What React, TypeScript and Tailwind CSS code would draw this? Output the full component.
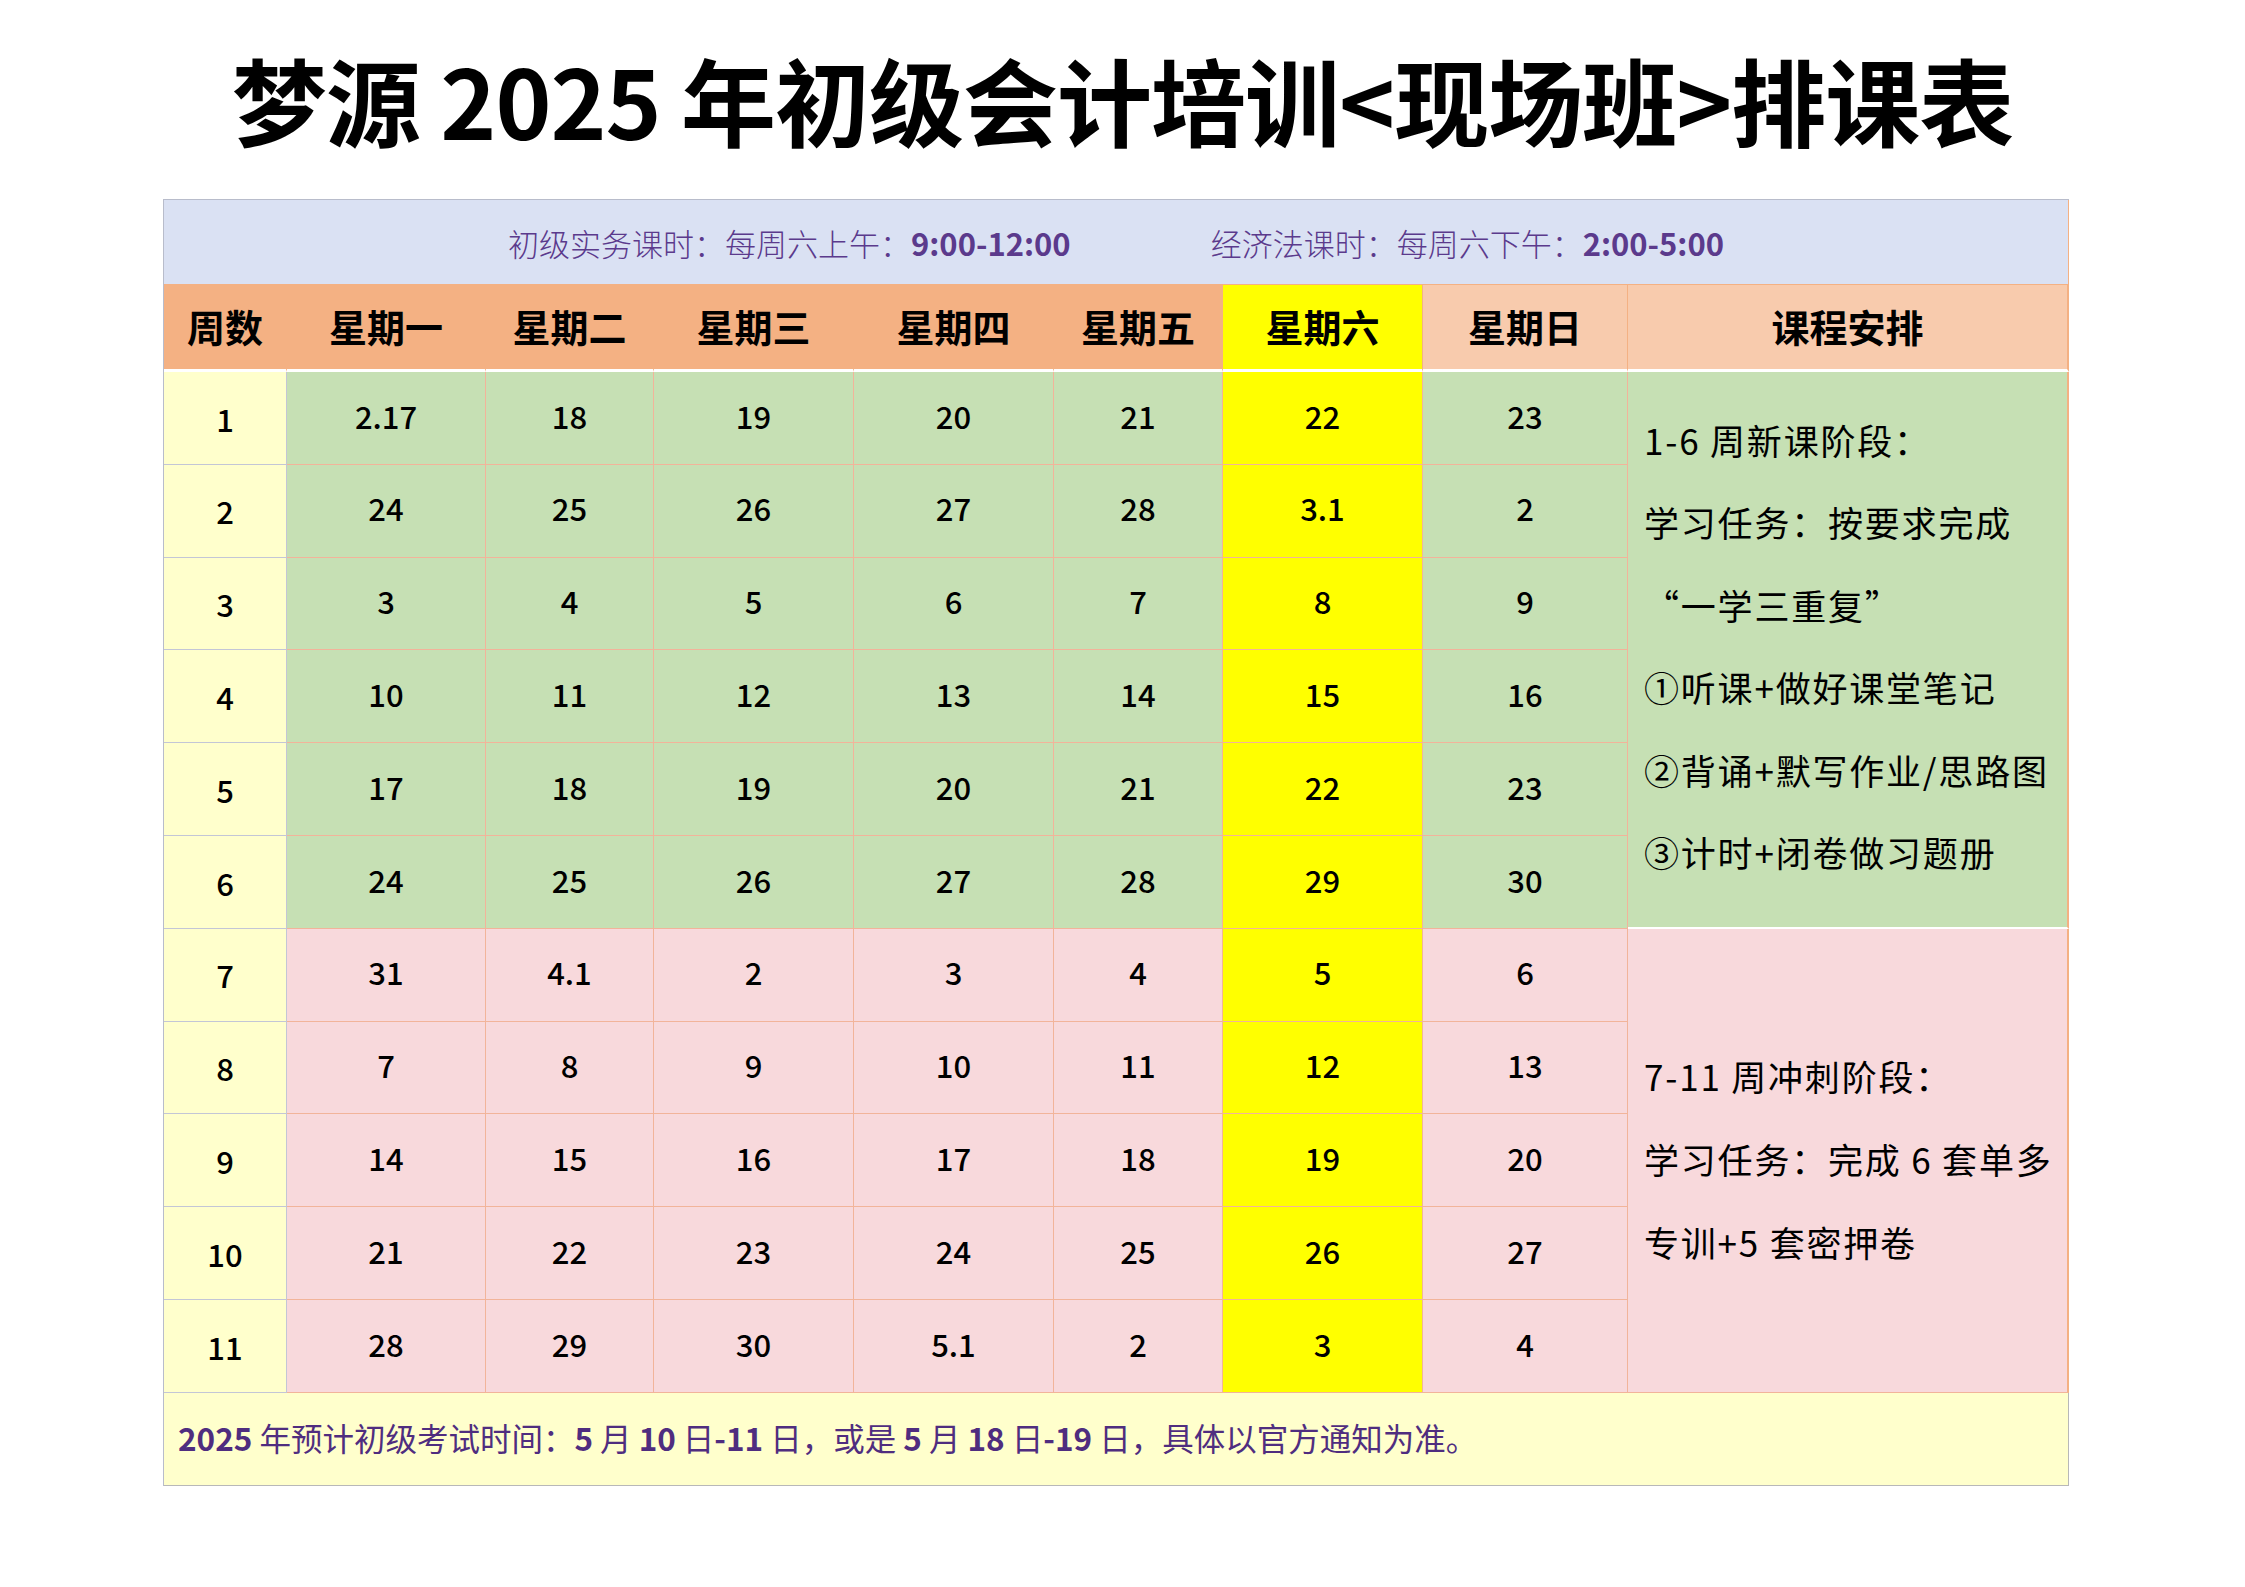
const weeks: { no: number; days: string[] }[] = [
  { no: 1, days: ['2.17', '18', '19', '20', '21', '22', '23'] },
  { no: 2, days: ['24', '25', '26', '27', '28', '3.1', '2'] },
  { no: 3, days: ['3', '4', '5', '6', '7', '8', '9'] },
  { no: 4, days: ['10', '11', '12', '13', '14', '15', '16'] },
  { no: 5, days: ['17', '18', '19', '20', '21', '22', '23'] },
  { no: 6, days: ['24', '25', '26', '27', '28', '29', '30'] },
  { no: 7, days: ['31', '4.1', '2', '3', '4', '5', '6'] },
  { no: 8, days: ['7', '8', '9', '10', '11', '12', '13'] },
  { no: 9, days: ['14', '15', '16', '17', '18', '19', '20'] },
  { no: 10, days: ['21', '22', '23', '24', '25', '26', '27'] },
  { no: 11, days: ['28', '29', '30', '5.1', '2', '3', '4'] },
];

const headers = ['星期一', '星期二', '星期三', '星期四', '星期五'];

const font = "font-['Noto_Sans_CJK_SC',sans-serif]";

export default function App() {
  return (
    <div className={`min-h-[1587px] w-[2245px] bg-white ${font}`}>
      {/* Title */}
      <h1 className="pt-[40px] text-center text-[95px] font-bold leading-[118px] text-black tracking-[-1px]">
        梦源 2025 年初级会计培训&lt;现场班&gt;排课表
      </h1>

      {/* Schedule grid */}
      <div className="ml-[163px] mt-[41px] grid w-[1906px] grid-cols-[123px_199px_168px_200px_200px_169px_200px_205px_1fr] grid-rows-[85px_87px_repeat(11,92.8px)_93px] border-l border-t border-[#b8bccb]">
        {/* info row */}
        <div className="col-span-9 flex items-center justify-center gap-[140px] border-b border-r border-[#f4b183] bg-[#dae1f3] pt-[2px] text-[31px] text-[#5b3a8c]">
          <span className="font-light">
            初级实务课时：每周六上午：<span className="font-semibold">9:00-12:00</span>
          </span>
          <span className="font-light">
            经济法课时：每周六下午：<span className="font-semibold">2:00-5:00</span>
          </span>
        </div>

        {/* header row */}
        <div className="flex items-center justify-center border-b-[3px] border-r border-b-white border-r-[#f4b183] bg-[#f4b183] pb-[4px] text-[38px] font-bold text-black">
          周数
        </div>
        {headers.map((h) => (
          <div
            key={h}
            className="flex items-center justify-center border-b-[3px] border-r border-b-white border-r-[#f4b183] bg-[#f4b183] pb-[4px] text-[38px] font-bold text-black"
          >
            {h}
          </div>
        ))}
        <div className="flex items-center justify-center border-b-[3px] border-r border-b-white border-r-[#f4b183] bg-[#ffff00] pb-[4px] text-[38px] font-bold text-black">
          星期六
        </div>
        <div className="flex items-center justify-center border-b-[3px] border-r border-b-white border-r-[#f4b183] bg-[#f8cbad] pb-[4px] text-[38px] font-bold text-black">
          星期日
        </div>
        <div className="flex items-center justify-center border-b-[3px] border-r-2 border-b-white border-r-[#f4b183] bg-[#f8cbad] pb-[4px] text-[38px] font-bold text-black">
          课程安排
        </div>

        {weeks.map((w, i) => {
          const green = w.no <= 6;
          return (
            <>
              <div
                key={`n${w.no}`}
                className="flex items-center justify-center border-b border-r border-b-[#c3c6d6] border-r-[#c3c6d6] bg-[#ffffcc] pt-[2px] text-[31px] font-medium text-black"
              >
                {w.no}
              </div>
              {w.days.map((d, j) => (
                <div
                  key={`d${w.no}-${j}`}
                  className={`flex items-center justify-center border-b border-r border-[#f2b49a] pb-[4px] text-[31px] font-medium text-black ${
                    j === 5 ? 'bg-[#ffff00]' : green ? 'bg-[#c6e0b4]' : 'bg-[#f8d9dc]'
                  }`}
                >
                  {d}
                </div>
              ))}
              {i === 0 && (
                <div
                  key="plan1"
                  className="row-span-6 flex flex-col justify-center border-b-2 border-r-2 border-b-white border-r-[#f4b183] bg-[#c6e0b4] pb-[6px] pl-[16px] text-[35px] leading-[82.5px] tracking-[1.8px] text-black"
                >
                  <p>1-6 周新课阶段：</p>
                  <p>学习任务：按要求完成</p>
                  <p>“一学三重复”</p>
                  <p>①听课+做好课堂笔记</p>
                  <p>②背诵+默写作业/思路图</p>
                  <p>③计时+闭卷做习题册</p>
                </div>
              )}
              {i === 6 && (
                <div
                  key="plan2"
                  className="row-span-5 flex flex-col justify-center border-b border-r-2 border-b-[#f2b49a] border-r-[#f4b183] bg-[#f8d9dc] pb-[4px] pl-[16px] text-[35px] leading-[83px] tracking-[1.8px] text-black"
                >
                  <p>7-11 周冲刺阶段：</p>
                  <p>学习任务：完成 6 套单多</p>
                  <p>专训+5 套密押卷</p>
                </div>
              )}
            </>
          );
        })}

        {/* footer */}
        <div className="col-span-9 flex items-center border-b border-r border-[#b8b8b8] bg-[#ffffcc] pb-[2px] pl-[14px] text-[31.5px] text-[#4f2d7f]">
          <span>
            <b>2025</b> 年预计初级考试时间：<b>5</b> 月 <b>10</b> 日<b>-11</b> 日，或是 <b>5</b> 月 <b>18</b> 日<b>-19</b> 日，具体以官方通知为准。
          </span>
        </div>
      </div>
    </div>
  );
}
